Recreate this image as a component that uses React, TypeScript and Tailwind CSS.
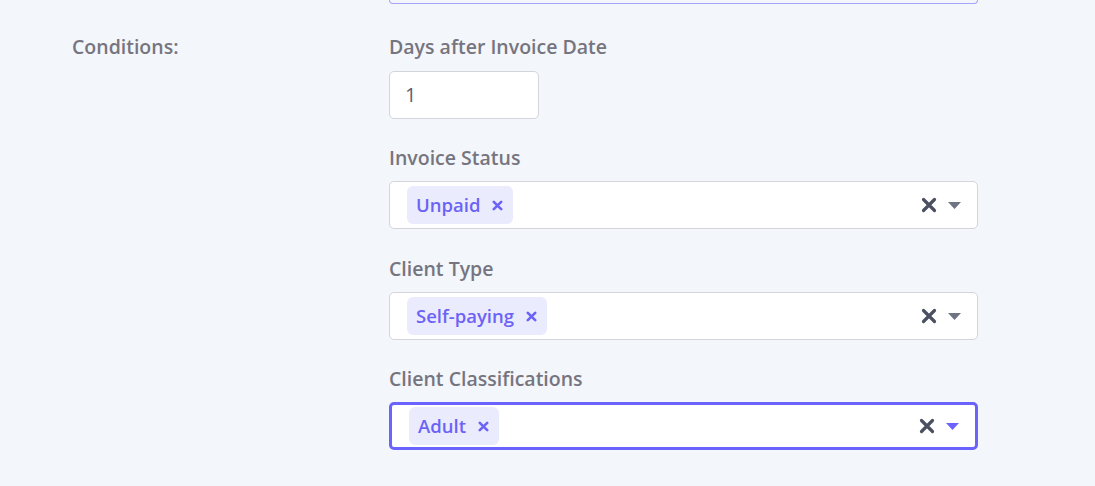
import React from 'react'

const font = { fontFamily: '"Open Sans", "Noto Sans", sans-serif' }

function Tag({ label }: { label: string }) {
  return (
    <span className="flex h-[38px] items-center rounded-[6px] bg-[#ebebfe] pl-[9px] pr-[10px] text-[18.5px] font-semibold text-[#6b63f6]">
      {label}
      <svg className="ml-[12px] h-[11px] w-[11px]" viewBox="0 0 11 11" fill="none" stroke="currentColor" strokeWidth={2.6} strokeLinecap="round">
        <path d="M1.8 1.8l7.4 7.4M9.2 1.8l-7.4 7.4" />
      </svg>
    </span>
  )
}

function MultiSelect({ tag, focused }: { tag: string; focused?: boolean }) {
  return (
    <div
      className={`flex h-[48px] items-center rounded-[5px] bg-white pr-[16px] ${
        focused ? 'border-[3px] border-[#6c63ff] pl-[17px]' : 'border border-[#d4d4dc] pl-[17px]'
      }`}
    >
      <Tag label={tag} />
      <div className="flex-1" />
      <svg className="h-[16px] w-[16px] text-[#4b5060]" viewBox="0 0 16 16" fill="none" stroke="currentColor" strokeWidth={3.2} strokeLinecap="round">
        <path d="M2.5 2.5l11 11M13.5 2.5l-11 11" />
      </svg>
      <svg className={`ml-[11px] h-[7px] w-[13px] ${focused ? 'text-[#6c63ff]' : 'text-[#6f7482]'}`} viewBox="0 0 13 7" fill="currentColor">
        <path d="M0 0h13L6.5 7z" />
      </svg>
    </div>
  )
}

function Label({ children }: { children: React.ReactNode }) {
  return <div className="mb-[11px] text-[19.5px] font-semibold leading-[24px] text-[#76757f]">{children}</div>
}

export default function App() {
  return (
    <div className="min-h-[486px] w-full bg-[#f3f6fb]" style={font}>
      <div className="flex">
        <div className="w-[389px] shrink-0 pl-[72px] pt-[35px]">
          <div className="text-[19.5px] font-semibold leading-[24px] text-[#76757f]">Conditions:</div>
        </div>
        <div className="w-[589px] shrink-0">
          <div className="h-[4px] rounded-b-[5px] border-x border-b border-[#a7a3f8]" />
          <div className="mt-[31px]">
            <div className="mb-[12px] text-[19.5px] font-semibold leading-[24px] text-[#76757f]">Days after Invoice Date</div>
            <div className="flex h-[48px] w-[150px] items-center rounded-[5px] border border-[#d4d4dc] bg-white pl-[15px] text-[20px] text-[#5c6070]">
              1
            </div>
          </div>
          <div className="mt-[27px]">
            <Label>Invoice Status</Label>
            <MultiSelect tag="Unpaid" />
          </div>
          <div className="mt-[28px]">
            <Label>Client Type</Label>
            <MultiSelect tag="Self-paying" />
          </div>
          <div className="mt-[27px]">
            <Label>Client Classifications</Label>
            <MultiSelect tag="Adult" focused />
          </div>
        </div>
      </div>
    </div>
  )
}
